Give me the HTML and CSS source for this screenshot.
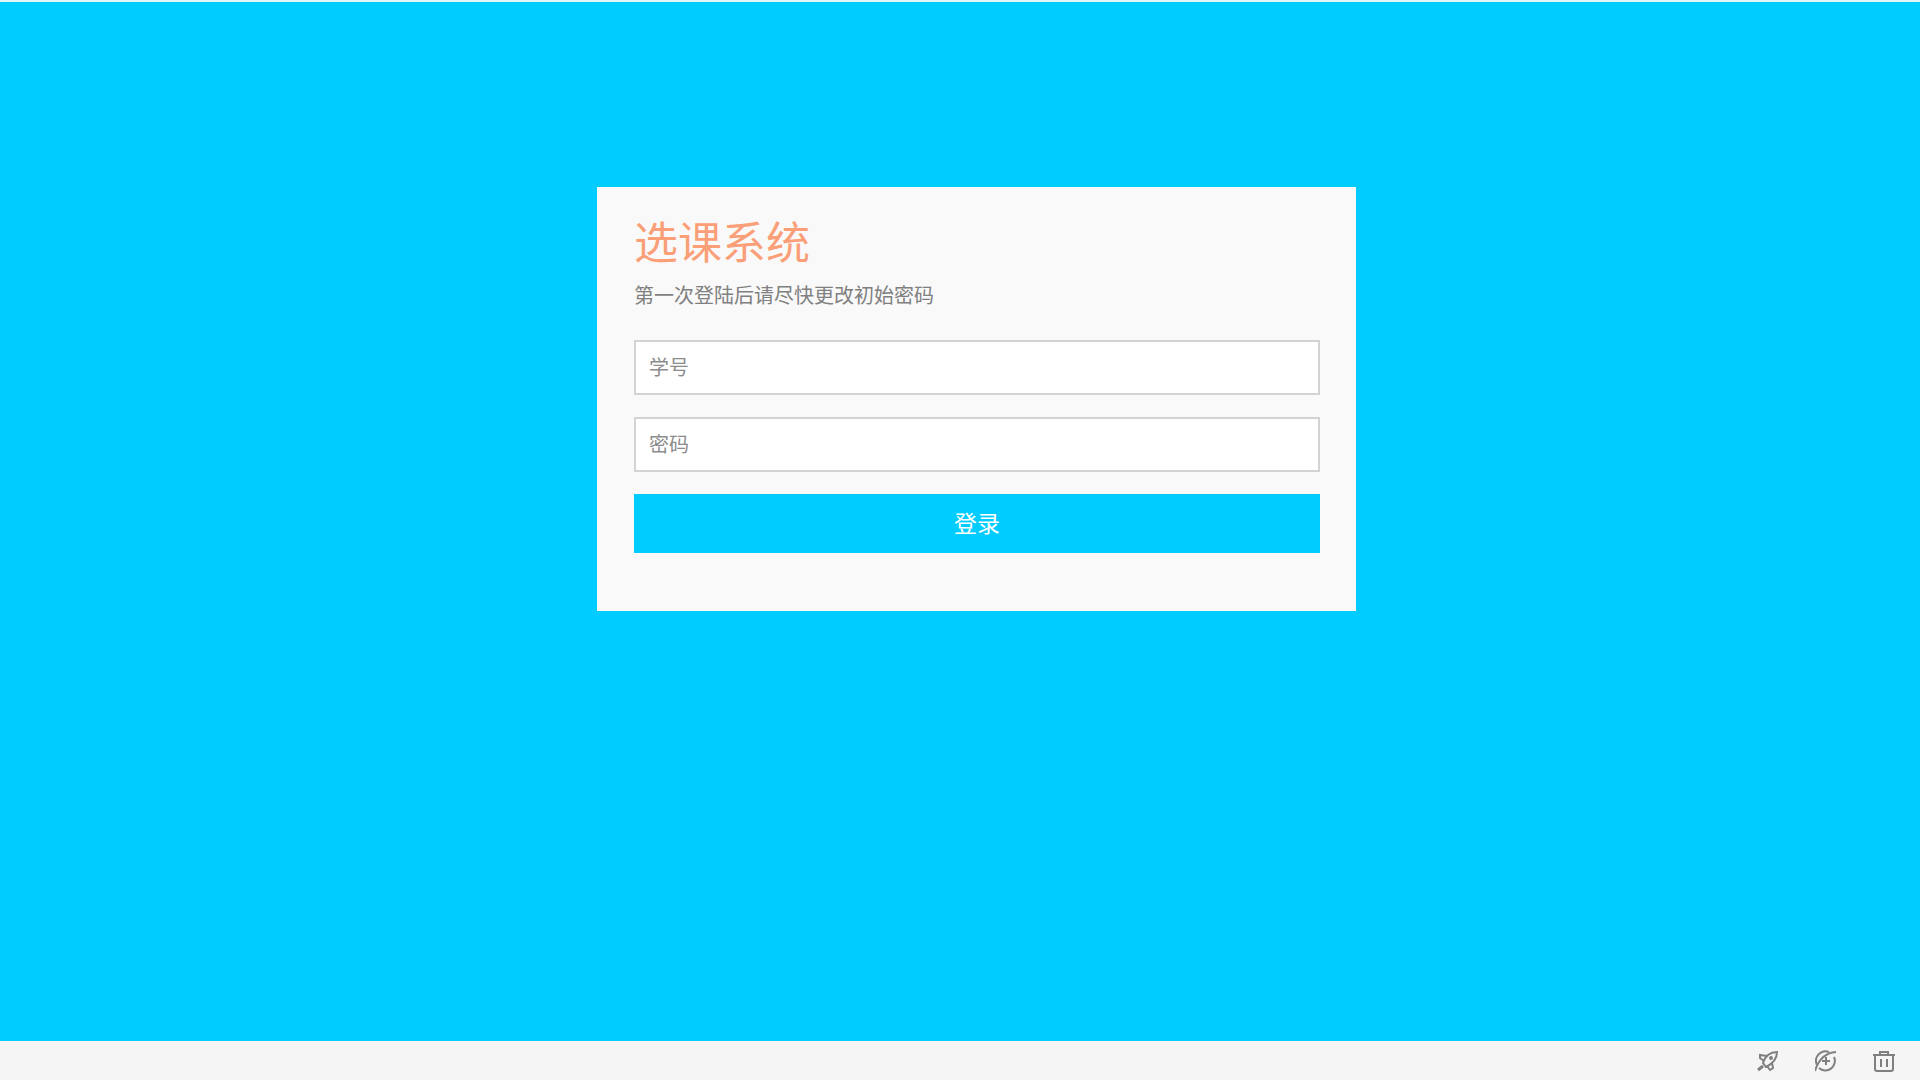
FILE: index.html
```html
<!DOCTYPE html>
<html lang="zh-CN">

<head>
  <meta charset="UTF-8">
  <meta name="viewport" content="width=device-width, initial-scale=1.0">
  <title>选课系统</title>
  <link rel="stylesheet" href="styles.css">
</head>

<body>
  <main class="main">
    <div class="login-box">
      <h1>选课系统</h1>
      <p>第一次登陆后请尽快更改初始密码</p>
      <form class="login-form">
        <input type="text" name="username" placeholder="学号" aria-label="学号">
        <input type="password" name="password" placeholder="密码" aria-label="密码">
        <button type="submit" class="login-btn">登录</button>
      </form>
    </div>
  </main>

  <footer class="toolbar">
    <button type="button" class="tool" aria-label="加速">
      <svg viewBox="0 0 22 22">
        <path d="M6 13C8 7 12 2 20 2C20 9 15 14 9 17Z" />
        <path d="M10 6L3 5L3 8L7 11M15 13L16 18L13 20L10 16" />
        <path d="M6 16L1 20" stroke-width="3" />
        <circle cx="14" cy="8" r="1" />
      </svg>
    </button>
    <button type="button" class="tool" aria-label="浏览器">
      <svg viewBox="0 0 22 22">
        <path d="M2 15A9.5 9.5 0 0 1 14 2M19 7A9.5 9.5 0 0 1 4 18" />
        <path d="M0 21C3 11 9 3 21 2" />
        <path d="M7 11L15 11M11 7L11 15" />
      </svg>
    </button>
    <button type="button" class="tool" aria-label="删除">
      <svg viewBox="0 0 22 22">
        <path d="M0 5L22 5M7 5L7 2L15 2L15 5M2 5L2 19Q2 21 4 21L18 21Q20 21 20 19L20 5" />
        <path d="M8 9L8 17M14 9L14 17" />
      </svg>
    </button>
  </footer>
</body>

</html>
```
FILE: styles.css
```css
* {
  box-sizing: border-box;
}

body {
  font-family: "Noto Sans CJK SC", sans-serif;
  margin: 0;
  min-height: 100vh;
  display: flex;
  flex-direction: column;
  background-color: #00ccff;
  border-top: 2px solid #e2f6fa;
}

.main {
  flex: 1;
  display: flex;
  justify-content: center;
  align-items: flex-start;
  padding: 185px 0 40px 33px;
}

.login-box {
  width: 42%;
  max-width: 759px;
  padding: 27px 36px 58px 37px;
  background-color: #f9f9f9;
}

.login-box h1 {
  margin: 0 0 15px;
  font-size: 44px;
  line-height: 52px;
  font-weight: 400;
  color: #fa9f78;
}

.login-box p {
  margin: 0 0 31px;
  font-size: 20px;
  line-height: 28px;
  color: #808080;
}

.login-form {
  display: flex;
  flex-direction: column;
  gap: 22px;
}

.login-form input {
  width: 100%;
  height: 55px;
  padding: 0 13px 2px;
  border: 2px solid #d2d4d4;
  border-radius: 0;
  background-color: #fff;
  font-family: inherit;
  font-size: 20px;
  color: #555;
}

.login-form input::placeholder {
  color: #8c8c8c;
  opacity: 1;
}

.login-btn {
  height: 59px;
  padding: 0 0 3px;
  border: none;
  background-color: #00ccff;
  color: #fff;
  font-family: inherit;
  font-size: 23px;
  cursor: pointer;
}

.toolbar {
  display: flex;
  justify-content: flex-end;
  align-items: center;
  gap: 36px;
  height: 39px;
  padding: 0 25px;
  background-color: #f5f5f5;
}

.tool {
  width: 22px;
  height: 22px;
  padding: 0;
  border: none;
  background: none;
  cursor: pointer;
}

.tool svg {
  display: block;
  width: 22px;
  height: 22px;
  fill: none;
  stroke: #808080;
  stroke-width: 2;
}
```
